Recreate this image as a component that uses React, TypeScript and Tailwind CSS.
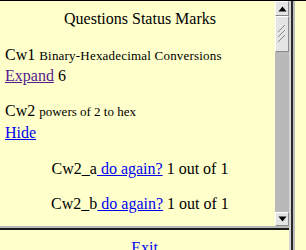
import React from "react";

function ArrowUp() {
  return (
    <svg width="9" height="6" viewBox="0 0 9 6">
      <polygon points="4.5,0.5 8.5,5.5 0.5,5.5" fill="#000" />
    </svg>
  );
}
function ArrowDown() {
  return (
    <svg width="9" height="6" viewBox="0 0 9 6">
      <polygon points="0.5,0.5 8.5,0.5 4.5,5.5" fill="#000" />
    </svg>
  );
}

function Scrollbar() {
  return (
    <div className="flex flex-col w-[14px] h-full bg-[#b9b9b9]">
      <div className="h-[15px] shrink-0 flex items-center justify-center bg-[#e4e4e4] border border-t-white border-l-white border-r-[#8a8a8a] border-b-[#8a8a8a]">
        <ArrowUp />
      </div>
      <div className="h-[36px] shrink-0 flex items-center justify-center bg-[#e4e4e4] border border-t-white border-l-white border-r-[#8a8a8a] border-b-[#8a8a8a]">
        <svg width="10" height="18" viewBox="0 0 10 18">
          <line x1="1" y1="7" x2="8" y2="0" stroke="#8a8a8a" strokeWidth="1" />
          <line x1="1" y1="12" x2="8" y2="5" stroke="#8a8a8a" strokeWidth="1" />
          <line x1="1" y1="17" x2="8" y2="10" stroke="#8a8a8a" strokeWidth="1" />
        </svg>
      </div>
      <div className="flex-1" />
      <div className="h-[14px] shrink-0 flex items-center justify-center bg-[#e4e4e4] border border-t-white border-l-white border-r-[#8a8a8a] border-b-[#8a8a8a]">
        <ArrowDown />
      </div>
    </div>
  );
}

export default function App() {
  const serif = { fontFamily: '"Liberation Serif", "Times New Roman", serif' };
  return (
    <div
      className="w-[306px] h-[250px] overflow-hidden bg-[#ffffcc] text-black flex flex-col"
      style={serif}
    >
      <div className="h-px bg-black shrink-0" />
      <div className="flex flex-1 min-h-0">
        <div className="w-[289px] flex flex-col">
          <div className="h-[225px] shrink-0 flex">
            <div className="w-[275px] pl-[5px] leading-[20px] text-[16px]">
              <div className="mt-[8px] text-center">Questions Status Marks</div>
              <div className="mt-[16px] whitespace-nowrap">
                Cw1 <span className="text-[13px] tracking-[0.2px]">Binary-Hexadecimal Conversions</span>
              </div>
              <div>
                <a href="#" className="text-[#551a8b] underline">Expand</a> 6
              </div>
              <div className="mt-[15px]">
                Cw2 <span className="text-[13px]">powers of 2 to hex</span>
              </div>
              <div className="mt-px">
                <a href="#" className="text-[#0000ee] underline">Hide</a>
              </div>
              <div className="mt-[16px] text-center">
                Cw2_a<a href="#" className="text-[#0000ee] underline">{" do again?"}</a> 1 out of 1
              </div>
              <div className="mt-[15px] text-center">
                Cw2_b<a href="#" className="text-[#0000ee] underline">{" do again?"}</a> 1 out of 1
              </div>
            </div>
            <Scrollbar />
          </div>
          <div className="h-[2px] bg-[#b8b8b8] shrink-0" />
          <div className="h-[2px] bg-[#1a1a1a] shrink-0" />
          <div className="pt-[8px] shrink-0 text-center text-[16px] leading-[20px]">
            <a href="#" className="text-[#0000ee] underline">Exit</a>
          </div>
        </div>
        <div className="w-[2px] bg-[#d6d6d6]" />
        <div className="w-[2px] bg-[#2a2a2a]" />
        <div className="w-[2px] bg-[#bdbdbd]" />
        <div className="flex-1" />
      </div>
    </div>
  );
}
